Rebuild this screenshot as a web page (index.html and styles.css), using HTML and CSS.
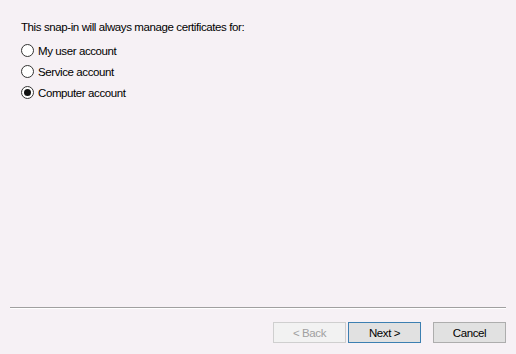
FILE: index.html
```html
<!DOCTYPE html>
<html lang="en">
<head>
  <meta charset="UTF-8">
  <title>Certificates snap-in</title>
  <link rel="stylesheet" href="styles.css">
</head>
<body>
  <div class="wizard">
    <!-- Account choice -->
    <div class="content">
      <p class="intro">This snap-in will always manage certificates for:</p>
      <label class="option"><span class="radio"></span>My user account</label>
      <label class="option"><span class="radio"></span>Service account</label>
      <label class="option"><span class="radio checked"></span>Computer account</label>
    </div>

    <!-- Navigation -->
    <div class="footer">
      <div class="separator"></div>
      <div class="buttons">
        <button type="button" class="btn" disabled>&lt; Back</button>
        <button type="button" class="btn default">Next &gt;</button>
        <button type="button" class="btn cancel">Cancel</button>
      </div>
    </div>
  </div>
</body>
</html>
```

FILE: styles.css
```css
body {
  margin: 0;
  padding: 0;
  background-color: #f6f1f5;
  font-family: "Liberation Sans", Arial, sans-serif;
  font-size: 11.5px;
  letter-spacing: -0.4px;
  color: #000;
}

.wizard {
  height: 354px;
  display: flex;
  flex-direction: column;
}

.content {
  flex: 1;
  padding: 20px 0 0 21px;
}

.intro {
  margin: 0 0 5px;
  line-height: 15px;
}

.option {
  display: flex;
  align-items: center;
  gap: 4px;
  height: 21px;
}

.radio {
  width: 11px;
  height: 11px;
  border: 1px solid #333;
  border-radius: 50%;
  background: #fff;
  display: flex;
  align-items: center;
  justify-content: center;
}

.radio.checked::after {
  content: "";
  width: 7px;
  height: 7px;
  border-radius: 50%;
  background: #111;
}

.footer {
  padding: 0 10px 11px;
}

.separator {
  height: 1px;
  background: #a0a0a0;
  border-bottom: 1px solid #fff;
  margin-bottom: 13px;
}

.buttons {
  display: flex;
  justify-content: flex-end;
}

.btn {
  width: 73px;
  height: 21px;
  padding: 0;
  margin: 0;
  font-family: inherit;
  font-size: 11.5px;
  letter-spacing: -0.4px;
  color: #000;
  background: #e1e1e1;
  border: 1px solid #adadad;
}

.btn[disabled] {
  color: #a0a0a0;
  background: #f2f2f2;
  border-color: #cfcfcf;
}

.btn.default {
  border-color: #3c7fb1;
  margin-left: 2px;
}

.btn.cancel {
  margin-left: 12px;
}
```
